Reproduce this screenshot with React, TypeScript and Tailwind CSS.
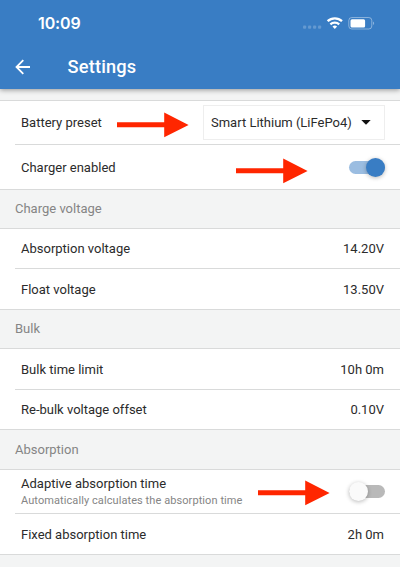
import type { ReactNode } from 'react';
import clsx from 'clsx';

interface RowProps {
  label: string;
  hint?: string;
  className: string;
  last?: boolean;
  children: ReactNode;
}

function StatusIcons() {
  return (
    <svg width="74" height="16" viewBox="0 0 74 16" fill="none">
      {/* No signal dots */}
      <g fill="#fff" fillOpacity="0.22">
        <rect x="2" y="10.5" width="3.2" height="3.2" rx="1" />
        <rect x="7" y="10.5" width="3.2" height="3.2" rx="1" />
        <rect x="12" y="10.5" width="3.2" height="3.2" rx="1" />
        <rect x="17" y="10.5" width="3.2" height="3.2" rx="1" />
      </g>
      {/* Wifi */}
      <g stroke="#fff" strokeWidth="2.3">
        <path d="M26.6 6.2a10.6 10.6 0 0 1 14.4 0" />
        <path d="M29.4 9.3a6.4 6.4 0 0 1 8.8 0" />
      </g>
      <path d="M33.8 13.9l-2.3-2.4a3.4 3.4 0 0 1 4.6 0z" fill="#fff" />
      {/* Battery */}
      <rect x="47.8" y="2.5" width="23" height="11.5" rx="3" stroke="#fff" strokeOpacity="0.4" />
      <rect x="49.5" y="4.2" width="14.6" height="8.2" rx="1.5" fill="#fff" />
      <path d="M72.2 6.5c1.2.5 1.2 2.9 0 3.4z" fill="#fff" fillOpacity="0.5" />
    </svg>
  );
}

function Arrow({ className }: { className: string }) {
  return (
    <svg className={clsx('absolute', className)} width="72" height="26" viewBox="0 0 72 26" fill="#ff2600">
      <path d="M0 10.3h47.2V.6L71.6 13 47.2 25.2V15.3H0z" />
    </svg>
  );
}

function Switch({ checked }: { checked: boolean }) {
  return (
    <div
      className={clsx(
        '-mr-px flex h-[13px] w-[36px] items-center rounded-full',
        checked ? 'justify-end bg-[#9bbde1]' : 'justify-start bg-[#b9b9b9]'
      )}
    >
      <div
        className={clsx(
          'h-[19px] w-[19px] shrink-0 rounded-full shadow-[0_1px_4px_rgba(0,0,0,0.28)]',
          checked ? 'bg-[#397dc4]' : 'bg-[#fafafa]'
        )}
      />
    </div>
  );
}

function Section({ title, className }: { title: string; className: string }) {
  return (
    <div className={clsx('flex items-center border-b border-[#d9dada] bg-[#f3f4f4] pl-[15px] text-[#858585]', className)}>
      {title}
    </div>
  );
}

function Row({ label, hint, className, last, children }: RowProps) {
  return (
    <div className={clsx('bg-white', !last && 'pl-[15px]')}>
      <div
        className={clsx(
          'relative flex items-center justify-between border-b border-[#d9dada] pr-4',
          last ? 'pl-[21px]' : 'pl-1.5',
          className
        )}
      >
        <div>
          <div>{label}</div>
          {hint && <div className="text-[11px] leading-[15px] tracking-[0.08px] text-[#858585]">{hint}</div>}
        </div>
        {children}
      </div>
    </div>
  );
}

export default function App() {
  return (
    <div className="h-[567px] w-[400px] overflow-hidden bg-[#f3f4f4] font-['Roboto',sans-serif] text-[13px] leading-[18px] text-[#2b2b2b]">
      <header className="relative h-[89px] bg-[#397dc4] text-white shadow-[0_1px_5px_rgba(0,0,0,0.4)]">
        <div className="flex h-[46px] items-center justify-between pr-[25px] pl-[38px]">
          <span className="font-['Inter',sans-serif] text-[16px] font-semibold tracking-[-0.1px]">10:09</span>
          <StatusIcons />
        </div>
        <div className="flex h-[41px] items-center pl-[15px]">
          <svg width="16" height="16" viewBox="0 0 16 16" fill="none" stroke="#fff" strokeWidth="1.8">
            <path d="M15 8H2M8.3 1.2L1.5 8l6.8 6.8" />
          </svg>
          <h1 className="pl-[36.5px] text-[18.2px] font-medium tracking-[0.2px]">Settings</h1>
        </div>
      </header>

      <div className="mt-[11px] border-t border-[#d9dada]">
        <Row label="Battery preset" className="h-[44px]">
          <div className="-mr-px flex h-[35px] w-[182px] items-center border border-[#eeeeee] pl-[7px]">
            <span>Smart Lithium (LiFePo4)</span>
            <svg className="ml-[9px]" width="10" height="5" viewBox="0 0 10 5" fill="#111">
              <path d="M0.3 0h9.4L5 4.7z" />
            </svg>
          </div>
          <Arrow className="top-[11px] left-[102px]" />
        </Row>
        <Row label="Charger enabled" className="h-[45px] pt-px" last>
          <Switch checked />
          <Arrow className="top-[13px] left-[236px]" />
        </Row>

        <Section title="Charge voltage" className="h-[39px]" />
        <Row label="Absorption voltage" className="h-[40px]">14.20V</Row>
        <Row label="Float voltage" className="h-[41px] pt-0.5" last>13.50V</Row>

        <Section title="Bulk" className="h-[39px]" />
        <Row label="Bulk time limit" className="h-[41px] pt-0.5">10h 0m</Row>
        <Row label="Re-bulk voltage offset" className="h-[40px] pt-px" last>0.10V</Row>

        <Section title="Absorption" className="h-[40px]" />
        <Row
          label="Adaptive absorption time"
          hint="Automatically calculates the absorption time"
          className="h-[44px]"
        >
          <Switch checked={false} />
          <Arrow className="top-[10px] left-[243px]" />
        </Row>
        <Row label="Fixed absorption time" className="h-[41px] pt-0.5" last>2h 0m</Row>
      </div>
    </div>
  );
}
